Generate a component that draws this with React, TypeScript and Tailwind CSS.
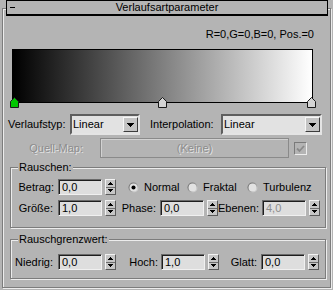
import React from "react";

const disabledText = "text-[#8c8c8c] [text-shadow:1px_1px_0_#e4e4e4]";

function Dropdown({ value, width }: { value: string; width: string }) {
    return (
        <div
            className={`flex h-[21px] items-center border-2 border-t-[#5e5e5e] border-l-[#5e5e5e] border-r-[#e4e4e4] border-b-[#e4e4e4] bg-[#e2e2e2] ${width}`}
        >
            <span className="flex-1 pl-[1px]">{value}</span>
            <div className="flex h-[15px] w-[15px] items-center justify-center border border-t-[#f6f6f6] border-l-[#f6f6f6] border-r-[#3c3c3c] border-b-[#3c3c3c] bg-[#c4c4c4]">
                <svg width="7" height="4" viewBox="0 0 7 4" shapeRendering="crispEdges">
                    <path d="M0 0H7L3.5 4Z" fill="#000" />
                </svg>
            </div>
        </div>
    );
}

function NumField({ value, disabled }: { value: string; disabled?: boolean }) {
    return (
        <div
            className={`flex h-[16px] w-[44px] items-center border border-t-[#6a6a6a] border-l-[#6a6a6a] border-r-[#f0f0f0] border-b-[#f0f0f0] bg-[#dedede] pl-[3px] shadow-[inset_1px_1px_0_#1e1e1e] ${disabled ? "text-[#8c8c8c]" : ""}`}
        >
            {value}
        </div>
    );
}

function Spinner() {
    return (
        <div className="ml-[3px] flex h-[16px] w-[11px] flex-col border border-t-[#f2f2f2] border-l-[#f2f2f2] border-r-[#5a5a5a] border-b-[#5a5a5a] bg-[#c6c6c6]">
            <div className="flex flex-1 items-center justify-center border-b border-[#6e6e6e]">
                <svg width="5" height="3" viewBox="0 0 5 3" shapeRendering="crispEdges">
                    <path d="M2.5 0L5 3H0Z" fill="#000" />
                </svg>
            </div>
            <div className="flex flex-1 items-center justify-center">
                <svg width="5" height="3" viewBox="0 0 5 3" shapeRendering="crispEdges">
                    <path d="M0 0H5L2.5 3Z" fill="#000" />
                </svg>
            </div>
        </div>
    );
}

function Radio({ label, checked, width }: { label: string; checked?: boolean; width: string }) {
    return (
        <div className={`flex items-center ${width}`}>
            <svg width="11" height="11" viewBox="0 0 12 12">
                <defs>
                    <linearGradient id={`rg-${label}`} x1="0" y1="0" x2="1" y2="1">
                        <stop offset="0" stopColor="#5a5a5a" />
                        <stop offset="0.55" stopColor="#9a9a9a" />
                        <stop offset="1" stopColor="#f4f4f4" />
                    </linearGradient>
                </defs>
                <circle cx="6" cy="6" r="5.5" fill={`url(#rg-${label})`} />
                <circle cx="6" cy="6" r="4.3" fill="#e2e2e2" />
                {checked && <circle cx="6" cy="6" r="2.2" fill="#000" />}
            </svg>
            <span className="ml-[5px]">{label}</span>
        </div>
    );
}

function Marker({ left, color }: { left: string; color: string }) {
    return (
        <svg className={`absolute top-[47px] ${left}`} width="9" height="11" viewBox="0 0 9 11">
            <path d="M4.5 0.5L8.5 4.5V10.5H0.5V4.5Z" fill={color} stroke="#1a1a1a" strokeWidth="1" />
        </svg>
    );
}

function GroupBox({ title, height, children }: { title: string; height: string; children: React.ReactNode }) {
    return (
        <div
            className={`ml-[7px] w-[316px] border border-[#7c7c7c] shadow-[inset_1px_1px_0_#ececec,1px_1px_0_#ececec] ${height}`}
        >
            <div className="-mt-[7px] ml-[7px] w-fit bg-[#b4b4b4] px-[1px]">{title}</div>
            {children}
        </div>
    );
}

export default function App() {
    return (
        <div className="h-[290px] w-[333px] overflow-hidden bg-[#b4b4b4] pt-[8px] font-['Liberation_Sans',Arial,sans-serif] text-[11px] leading-[13px] text-black">
            <div className="mx-[2px] h-[280px] border border-[#7c7c7c] shadow-[inset_1px_1px_0_#ececec,1px_1px_0_#ececec]">
                {/* rollout header */}
                <div className="-mt-[9px] ml-[3px] grid h-[16px] w-[322px] grid-cols-[20px_1fr_20px] items-center border border-b-2 border-black bg-[#b4b4b4]">
                    <div className="ml-[3px] h-[1px] w-[5px] bg-black" />
                    <div className="text-center">Verlaufsartparameter</div>
                    <div />
                </div>

                <div className="mt-[12px] pr-[16px] text-right">R=0,G=0,B=0, Pos.=0</div>

                <div className="relative mt-[8px] ml-[9px] h-[54px] w-[301px] border border-black bg-[linear-gradient(to_right,#000,#fff)]">
                    <Marker left="left-[-3px]" color="#00c800" />
                    <Marker left="left-[145px]" color="#d4d4d4" />
                    <Marker left="left-[294px]" color="#d4d4d4" />
                </div>

                <div className="mt-[11px] flex h-[21px] items-center">
                    <div className="w-[67px] pl-[5px]">Verlaufstyp:</div>
                    <Dropdown value="Linear" width="w-[70px]" />
                    <div className="w-[81px] pl-[10px]">Interpolation:</div>
                    <Dropdown value="Linear" width="w-[101px]" />
                </div>

                <div className="mt-[3px] flex h-[20px] items-center">
                    <div className={`w-[97px] pr-[17px] text-right ${disabledText}`}>Quell-Map:</div>
                    <div
                        className={`flex h-[20px] w-[189px] items-center justify-center border border-[#8a8a8a] shadow-[inset_1px_1px_0_#d2d2d2] ${disabledText}`}
                    >
                        (Keine)
                    </div>
                    <div className="ml-[5px] flex h-[13px] w-[13px] items-center justify-center border border-t-[#7a7a7a] border-l-[#7a7a7a] border-r-[#ececec] border-b-[#ececec] bg-[#b4b4b4]">
                        <svg width="9" height="9" viewBox="0 0 9 9">
                            <path d="M1 4.5L3.5 7L8 2" fill="none" stroke="#8a8a8a" strokeWidth="1.8" />
                        </svg>
                    </div>
                </div>

                <div className="mt-[9px]">
                    <GroupBox title="Rauschen:" height="h-[61px]">
                        <div className="mt-[5px] flex h-[16px] items-center">
                            <div className="w-[47px] pr-[4px] text-right">Betrag:</div>
                            <NumField value="0,0" />
                            <Spinner />
                            <div className="ml-[12px] flex">
                                <Radio label="Normal" checked width="w-[59px]" />
                                <Radio label="Fraktal" width="w-[60px]" />
                                <Radio label="Turbulenz" width="w-[66px]" />
                            </div>
                        </div>
                        <div className="mt-[5px] flex h-[16px] items-center">
                            <div className="w-[47px] pr-[5px] text-right">Größe:</div>
                            <NumField value="1,0" />
                            <Spinner />
                            <div className="w-[44px] pr-[4px] text-right">Phase:</div>
                            <NumField value="0,0" />
                            <Spinner />
                            <div className="w-[44px] pr-[3px] text-right">Ebenen:</div>
                            <NumField value="4,0" disabled />
                            <Spinner />
                        </div>
                    </GroupBox>
                </div>

                <div className="mt-[11px]">
                    <GroupBox title="Rauschgrenzwert:" height="h-[40px]">
                        <div className="mt-[8px] flex h-[16px] items-center">
                            <div className="w-[47px] pr-[5px] text-right">Niedrig:</div>
                            <NumField value="0,0" />
                            <Spinner />
                            <div className="w-[45px] pr-[3px] text-right">Hoch:</div>
                            <NumField value="1,0" />
                            <Spinner />
                            <div className="w-[42px] pr-[4px] text-right">Glatt:</div>
                            <NumField value="0,0" />
                            <Spinner />
                        </div>
                    </GroupBox>
                </div>
            </div>
        </div>
    );
}
